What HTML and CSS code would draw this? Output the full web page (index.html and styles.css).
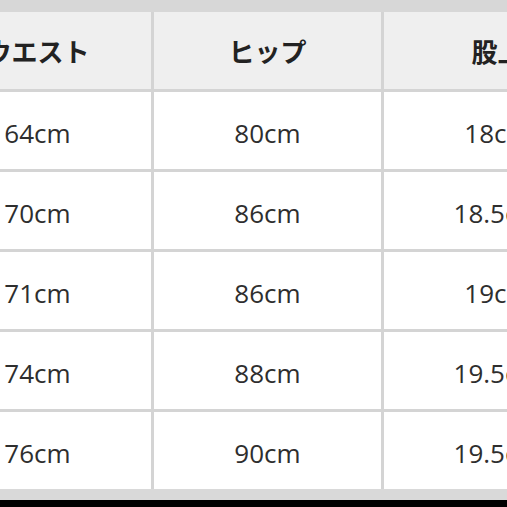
FILE: index.html
```html
<!DOCTYPE html>
<html lang="ja">
<head>
<meta charset="utf-8">
<link rel="stylesheet" href="styles.css">
</head>
<body>
<div class="frame">
  <div class="table">
    <div class="cell head">ウエスト</div>
    <div class="cell head">ヒップ</div>
    <div class="cell head">股上</div>

    <div class="cell">64cm</div>
    <div class="cell">80cm</div>
    <div class="cell">18cm</div>

    <div class="cell">70cm</div>
    <div class="cell">86cm</div>
    <div class="cell">18.5cm</div>

    <div class="cell">71cm</div>
    <div class="cell">86cm</div>
    <div class="cell">19cm</div>

    <div class="cell">74cm</div>
    <div class="cell">88cm</div>
    <div class="cell">19.5cm</div>

    <div class="cell">76cm</div>
    <div class="cell">90cm</div>
    <div class="cell">19.5cm</div>
  </div>
  <div class="bottom-bar"></div>
</div>
</body>
</html>
```
FILE: styles.css
```css
html, body {
  margin: 0;
  padding: 0;
  background: #000;
}

.frame {
  width: 507px;
  height: 500px;
  overflow: hidden;
  background: #d7d7d7;
  padding-top: 12px;
  box-sizing: border-box;
}

.table {
  display: grid;
  grid-template-columns: 227px 227px 227px;
  grid-auto-rows: 77px;
  gap: 3px;
  margin-left: -76px;
  width: 687px;
  background: #d4d4d4;
}

.cell {
  background: #fff;
  display: flex;
  align-items: center;
  justify-content: center;
  font-family: "Open Sans", "Noto Sans", sans-serif;
  font-size: 26px;
  color: #2e2e2e;
  padding-top: 4px;
  box-sizing: border-box;
}

.cell.head {
  background: #efefef;
  font-family: "Noto Sans CJK JP", sans-serif;
  font-weight: 700;
  font-size: 26px;
  color: #222;
  padding-top: 0;
}

.bottom-bar {
  height: 11px;
  background: #d9d9d9;
}
```
